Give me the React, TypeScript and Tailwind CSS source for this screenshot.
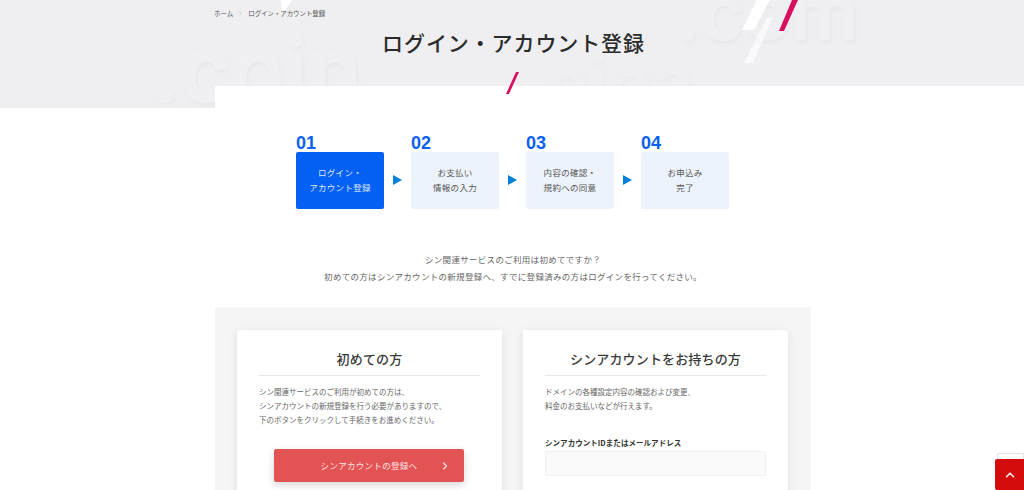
import { ChevronRight, ChevronUp } from "lucide-react";

const font = { fontFamily: '"Noto Sans CJK JP", "Noto Sans", sans-serif' };

const steps = [
  { no: "01", lines: ["ログイン・", "アカウント登録"], active: true },
  { no: "02", lines: ["お支払い", "情報の入力"], active: false },
  { no: "03", lines: ["内容の確認・", "規約への同意"], active: false },
  { no: "04", lines: ["お申込み", "完了"], active: false },
];

function GhostWord({ text, className }: { text: string; className: string }) {
  return (
    <span
      className={`absolute font-['Inter',sans-serif] font-semibold leading-none text-[#f0f0f3] [text-shadow:1px_2px_4px_#e6e6ea,-1px_-1px_3px_#f4f4f6] ${className}`}
    >
      {text}
    </span>
  );
}

function Hero() {
  return (
    <div className="relative h-[108px] overflow-hidden bg-[#efeff2]">
      <GhostWord text=".coin" className="left-[152px] top-[26px] text-[88px]" />
      <GhostWord text=".com" className="left-[676px] top-[-26px] text-[76px]" />
      <GhostWord text="nina" className="left-[545px] top-[46px] text-[72px] opacity-60" />
      <svg className="absolute left-0 top-0" width="1024" height="108" viewBox="0 0 1024 108">
        <path d="M742 30 L757 0 L770 0 L754 30 Z" fill="#ffffff" />
        <path d="M744 63 L767 18 L773 18 L753 63 Z" fill="#ffffff" opacity="0.6" />
        <path d="M281 0 L292 0 L282 14 Z" fill="#ffffff" />
        <path d="M779 31 L792 0 L798 0 L784 31 Z" fill="#d6105f" />
      </svg>
      <div className="relative mx-auto w-[596px] pt-[9px]">
        <div className="flex items-center gap-[4px] text-[6.5px] leading-[9px] text-[#555]">
          <span>ホーム</span>
          <ChevronRight size={7} strokeWidth={1} className="text-[#888]" />
          <span className="tracking-[-0.1px]">ログイン・アカウント登録</span>
        </div>
        <h1 className="mt-[9px] pl-[3px] text-center text-[21px] font-medium leading-[30px] tracking-[0.9px] text-[#2b2b2b]">
          ログイン・アカウント登録
        </h1>
      </div>
    </div>
  );
}

function Steps() {
  return (
    <div className="flex justify-center gap-[27px] pr-[1px]">
      {steps.map((step, i) => (
        <div key={step.no} className="relative flex w-[88px] flex-col">
          <span className="font-['Liberation_Sans',sans-serif] text-[18px] font-bold leading-[17px] text-[#0a5ff0]">
            {step.no}
          </span>
          <div
            className={`flex h-[57px] flex-col items-center justify-center rounded-[2px] pb-[2px] text-[8.5px] leading-[15px] tracking-[0.3px] ${
              step.active ? "bg-[#0560f5] text-[#dce9ff]" : "bg-[#edf3fb] text-[#555]"
            }`}
          >
            {step.lines.map((line) => (
              <span key={line}>{line}</span>
            ))}
          </div>
          {i < steps.length - 1 && (
            <span className="absolute left-[97px] top-[40px] h-0 w-0 border-y-[5.5px] border-l-[9px] border-y-transparent border-l-[#0680d8]" />
          )}
        </div>
      ))}
    </div>
  );
}

function Card({ title, children }: { title: string; children: React.ReactNode }) {
  return (
    <div className="h-[200px] w-[265px] rounded-[2px] bg-white px-[22px] pt-[19px] shadow-[0_2px_10px_rgba(0,0,0,0.09)]">
      <h2 className="border-b border-[#e8e8e8] pb-[6px] text-center text-[13px] font-medium leading-[20px] tracking-[0.15px] text-[#3a3a3a]">
        {title}
      </h2>
      {children}
    </div>
  );
}

export default function App() {
  return (
    <div className="relative h-[490px] w-[1024px] overflow-hidden bg-white" style={font}>
      <Hero />
      <div className="relative ml-[215px] mt-[-22px] bg-white pt-[49px]">
        <div className="w-[596px]">
          <Steps />
          <div className="mt-[42px] text-center text-[8.5px] leading-[17px] tracking-[0.3px] text-[#666]">
            <p>シン関連サービスのご利用は初めてですか？</p>
            <p>初めての方はシンアカウントの新規登録へ、すでに登録済みの方はログインを行ってください。</p>
          </div>
          <div className="mt-[22px] flex h-[200px] justify-between bg-[#f5f5f5] pl-[22px] pr-[23px] pt-[23px]">
            <Card title="初めての方">
              <div className="mt-[9px] text-[7.5px] leading-[14px] text-[#666]">
                <p>シン関連サービスのご利用が初めての方は、</p>
                <p>シンアカウントの新規登録を行う必要がありますので、</p>
                <p>下のボタンをクリックして手続きをお進めください。</p>
              </div>
              <button className="relative ml-[15px] mt-[22px] flex h-[33px] w-[190px] items-center justify-center rounded-[2px] bg-[#e25353] text-[8.5px] tracking-[0.3px] text-[#fde3e3] shadow-[0_3px_8px_rgba(0,0,0,0.16)]">
                シンアカウントの登録へ
                <ChevronRight size={12} strokeWidth={2.5} className="absolute right-[13px] text-[#fde3e3]" />
              </button>
            </Card>
            <Card title="シンアカウントをお持ちの方">
              <div className="mt-[9px] text-[7.5px] leading-[14px] text-[#666]">
                <p>ドメインの各種設定内容の確認および変更、</p>
                <p>料金のお支払いなどが行えます。</p>
              </div>
              <label className="mt-[24px] block text-[7.5px] font-bold leading-[11px] tracking-[0.05px] text-[#333]">
                シンアカウントIDまたはメールアドレス
              </label>
              <input className="mt-[3px] h-[25px] w-full rounded-[2px] border border-[#f0f0f0] bg-[#fafafa]" />
            </Card>
          </div>
        </div>
      </div>
      <svg className="absolute left-[505px] top-[71px]" width="15" height="24" viewBox="0 0 15 24">
        <path d="M1 23 L11 1 L14 1 L4 23 Z" fill="#d6105f" />
      </svg>
      <div className="absolute left-[997px] top-[453px] h-[12px] w-[27px] rounded-tl-[2px] border border-[#e4e4e4] bg-white" />
      <button className="absolute left-[995px] top-[459px] flex h-[31px] w-[29px] items-center justify-center rounded-l-[2px] bg-[#d40c0c]">
        <ChevronUp size={14} strokeWidth={3} className="text-[#fde3e3]" />
      </button>
    </div>
  );
}
